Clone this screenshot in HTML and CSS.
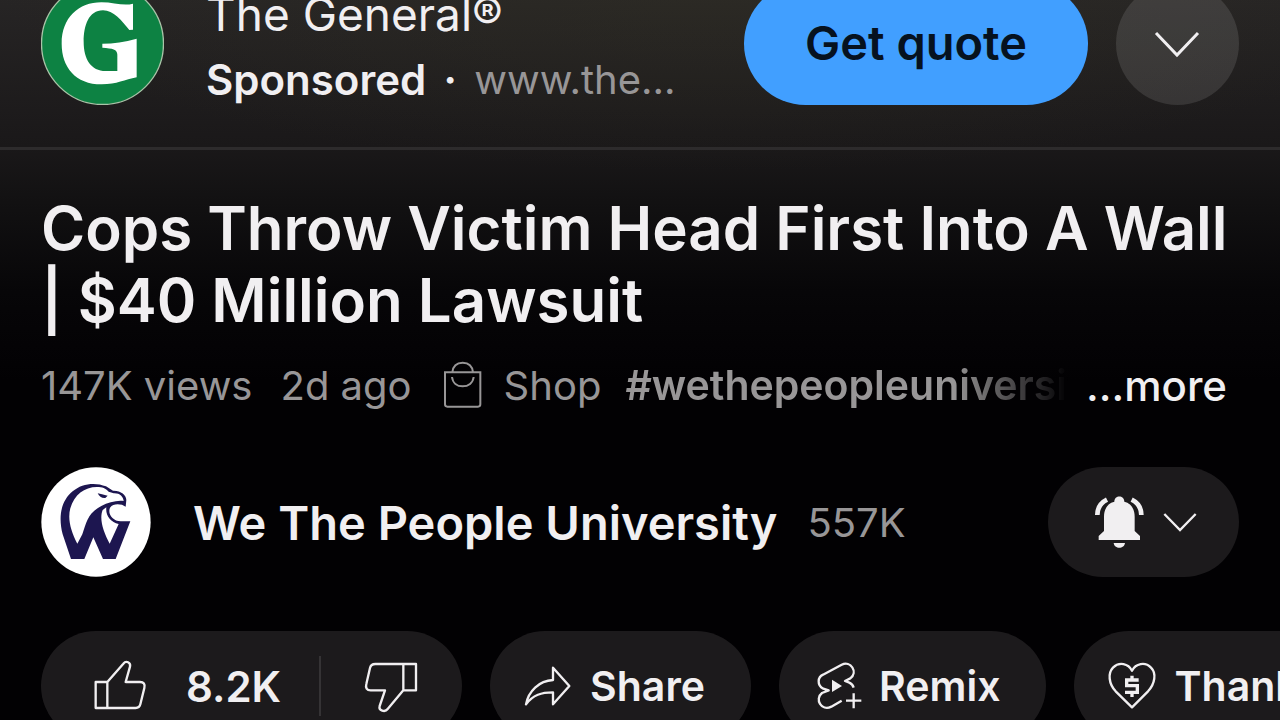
FILE: index.html
```html
<!DOCTYPE html>
<html lang="en">
<head>
<meta charset="utf-8">
<meta name="viewport" content="width=device-width, initial-scale=1">
<title>Cops Throw Victim Head First Into A Wall | $40 Million Lawsuit</title>
<link rel="stylesheet" href="styles.css">
</head>
<body>
<main class="watch">
  <section class="ad" aria-label="Advertisement">
    <svg class="ad-logo" viewBox="123 -51 369 369" role="img" aria-label="The General logo">
      <circle cx="307.500" cy="133.500" r="183" fill="#0d8243" stroke="#a9c4a8" stroke-width="4"/>
      <path fill="#fff" d="M399 14V92L388 93C365 65 340 34 309 34C266 34 251 80 251 128C251 180 273 216 317 216H352V167C352 151 338 148 307 146V134C342 134 373 129 410 119V235C374 242 351 256 305 256C226 256 185 204 185 134C185 56 236 10 304 10C342 10 371 22 399 14Z"/>
    </svg>
    <div class="ad-text">
      <div class="ad-name">The General®</div>
      <div class="ad-line"><b class="ad-sponsored">Sponsored</b><span class="ad-dot">·</span><a class="ad-url" href="#">www.the...</a></div>
    </div>
    <button class="ad-cta" type="button">Get quote</button>
    <button class="ad-toggle" type="button" aria-label="Show ad details">
      <svg class="chevron-lg" viewBox="0 0 48 30"><path class="line" d="M2 4L23 26L44 4"/></svg>
    </button>
  </section>

  <section class="info">
    <h1 class="title">Cops Throw Victim Head First Into A Wall | $40 Million Lawsuit</h1>
    <div class="meta">
      <span class="views">147K views</span>
      <span class="age">2d ago</span>
      <svg class="bag" viewBox="66 27 126 150" aria-hidden="true"><path d="M75 64H181V160Q181 167 174 167H82Q75 167 75 160ZM97 64C99 45 111 35 128 35C145 35 157 45 159 64M96 78C98 96 111 106 128 106C145 106 159 96 161 78"/></svg>
      <a class="shop" href="#">Shop</a>
      <a class="hashtag" href="#">#wethepeopleuniversity</a>
      <button class="more" type="button">...more</button>
    </div>
  </section>

  <section class="channel">
    <svg class="channel-logo" viewBox="63 51 330 330" role="img" aria-label="We The People University logo">
      <circle cx="228" cy="216" r="164" fill="#fff"/>
      <path fill="#1d1650" d="M153 327L128 253C113 195 126 150 158 124C185 100 226 96 258 109L279 122C302 121 319 135 319 150L317 170L306 164C291 161 278 162 270 173C262 191 278 213 302 214H331L287 327H249L220 262L193 327Z"/>
      <path fill="#fff" d="M172 281C153 244 142 208 151 175C163 134 193 111 231 111C247 111 257 115 266 125L281 130C299 129 310 140 311 153C291 150 265 157 244 168C202 190 200 217 187 253Z"/>
      <path fill="#fff" d="M269 281C250 245 237 207 248 180L259 172C256 197 272 217 296 222Z"/>
      <path fill="#1d1650" d="M233 130L246 133L263 137L256 144C245 145 238 140 233 130Z"/>
    </svg>
    <a class="channel-name" href="#">We The People University</a>
    <span class="subs">557K</span>
    <button class="bell" type="button" aria-label="Notification settings">
      <svg class="bell-icon" viewBox="184 132 168 168"><path fill="#f1eff1" d="M207 270V258L223 243V200C223 176 235 159 254 155C254 134 284 134 284 155C303 159 315 176 315 200V243L331 258V270ZM252 279H286C284 298 254 298 252 279Z"/><path fill="none" stroke="#f1eff1" stroke-width="14" d="M203 195C203 173 214 158 232 149M335 195C335 173 324 158 306 149"/></svg>
      <svg class="chevron-sm" viewBox="396 180 108 72"><path class="line" d="M403 192L450 240L497 192"/></svg>
    </button>
  </section>

  <section class="actions" aria-label="Video actions">
    <div class="pill rate">
      <button class="like" type="button" aria-label="Like, 8.2K">
        <svg class="thumb" viewBox="186 114 168 168"><path class="outline" d="M197 186H232V264H197ZM232 186L280 131C288 121 303 127 300 140L287 186H330C341 186 346 192 343 204L331 253C329 261 325 264 317 264H232"/></svg>
        <span>8.2K</span>
      </button>
      <span class="divider"></span>
      <button class="dislike" type="button" aria-label="Dislike">
        <svg class="thumb" viewBox="999 114 168 168"><path class="outline" d="M1158 211H1120V132H1158ZM1120 211L1073 267C1065 278 1045 272 1049 258L1065 211H1022C1010 211 1006 203 1009 192L1020 144C1022 135 1027 132 1036 132H1120"/></svg>
      </button>
    </div>
    <button class="pill action" type="button">
      <svg class="icon" viewBox="126 120 156 156"><path class="outline" d="M219 143L268 198L219 253V217C185 217 159 224 138 253C145 214 177 182 219 180Z"/></svg>
      <span>Share</span>
    </button>
    <button class="pill action" type="button">
      <svg class="icon" viewBox="38 120 156 156"><path class="outline" d="M130 242L99 260C69 275 48 237 71 219L91 211L75 206C55 195 58 171 74 164L130 134C157 120 180 157 156 175L140 183L153 188C160 191 164 196 166 203M166 220V265M143 242H189"/><path fill="#f1eff1" d="M101 179L131 198L101 216Z"/></svg>
      <span>Remix</span>
    </button>
    <button class="pill action" type="button">
      <svg class="icon" viewBox="917 120 156 156"><path class="outline" d="M995 262L946 214C925 191 922 160 938 143C957 124 984 131 995 152C1006 131 1034 124 1052 143C1069 160 1064 191 1043 214Z"/><path fill="none" stroke="#f1eff1" stroke-width="10" d="M1015 180H979V197H1011V217H974M995 167V180M995 217V231"/></svg>
      <span>Thanks</span>
    </button>
  </section>
</main>
</body>
</html>
```
FILE: styles.css
```css
* { box-sizing: border-box; }

body {
  margin: 0;
  height: 100vh;
  overflow: hidden;
  background: #020103;
  color: #f1eff1;
  font-family: Inter, Roboto, sans-serif;
}

button {
  margin: 0;
  padding: 0;
  border: 0;
  background: none;
  color: inherit;
  font: inherit;
  white-space: nowrap;
}

a { color: inherit; text-decoration: none; }
svg { display: block; flex: none; }

.line { fill: none; stroke: #f1eff1; }
.outline { fill: none; stroke: #f1eff1; stroke-width: 7; stroke-linejoin: round; }

/* The page is scrolled so that the ad row is partly out of view. */
.watch {
  margin-top: -18px;
  background:
    radial-gradient(ellipse 720px 190px at 56% 0, rgba(52, 50, 36, 0.4), transparent),
    linear-gradient(#282626 0, #1a1819 165px, #121112 220px, #070608 310px, #020103 400px);
}

.ad {
  display: flex;
  align-items: flex-start;
  padding: 0 41px 33px;
  border-bottom: 3px solid #2d2b2c;
}
.ad-logo { width: 123px; height: 123px; }
.ad-text { flex: 1; min-width: 0; padding-left: 42px; white-space: nowrap; }
.ad-name { font-size: 46px; line-height: 64px; }
.ad-line { display: flex; font-size: 40px; line-height: 68px; }
.ad-sponsored { font-size: 42px; font-weight: 600; }
.ad-dot { width: 48px; text-align: center; font-weight: 700; }
.ad-url { color: #989697; }
.ad-cta {
  width: 344px;
  height: 123px;
  padding-bottom: 3px;
  border-radius: 62px;
  background: #419fff;
  color: #06121f;
  font-size: 47px;
  font-weight: 600;
}
.ad-toggle {
  display: grid;
  place-items: center;
  width: 123px;
  height: 123px;
  margin-left: 28px;
  border-radius: 50%;
  background: rgba(255, 255, 255, 0.11);
}
.chevron-lg { width: 48px; height: 30px; stroke-width: 3; }

.info { padding: 42px 41px 0; }
.title {
  margin: 0;
  font-size: 60px;
  font-weight: 600;
  line-height: 72px;
}
.meta {
  display: flex;
  align-items: center;
  height: 50px;
  margin-top: 24px;
  color: #989697;
  font-size: 40px;
  white-space: nowrap;
}
.age { margin-left: 28px; }
.bag { width: 42px; height: 50px; margin-left: 30px; fill: none; stroke: #989697; stroke-width: 6; }
.shop { margin-left: 20px; }
.hashtag {
  flex: 1;
  min-width: 0;
  margin-left: 24px;
  overflow: hidden;
  font-size: 41px;
  font-weight: 600;
  -webkit-mask-image: linear-gradient(to right, #000 74%, transparent 100%);
  mask-image: linear-gradient(to right, #000 74%, transparent 100%);
}
.more { margin: 0 12px 0 18px; color: #f1eff1; font-size: 42px; font-weight: 500; }

.channel {
  display: flex;
  align-items: center;
  padding: 57px 41px 0;
}
.channel-logo { width: 110px; height: 110px; }
.channel-name { margin-left: 42px; font-size: 47px; font-weight: 600; }
.subs { margin-left: 30px; color: #989697; font-size: 40px; }
.bell {
  display: flex;
  align-items: center;
  gap: 15px;
  height: 110px;
  margin-left: auto;
  padding: 0 41px 0 43px;
  border-radius: 55px;
  background: #1c1a1c;
}
.bell-icon { width: 56px; height: 56px; }
.chevron-sm { width: 36px; height: 24px; stroke-width: 7; }

.actions {
  display: flex;
  gap: 28px;
  padding: 54px 0 0 41px;
  overflow: hidden;
  font-size: 41px;
  font-weight: 600;
}
.pill {
  display: flex;
  flex: none;
  align-items: center;
  height: 110px;
  border-radius: 55px;
  background: #1c1a1c;
}
.rate { padding: 0 43px 0 51px; }
.like { display: flex; align-items: center; gap: 38px; font-size: 42px; }
.thumb { width: 56px; height: 56px; }
.divider { width: 2px; height: 60px; margin: 0 42px 0 38px; background: #353335; }
.action { gap: 16px; padding: 0 46px 0 32px; }
.icon { width: 52px; height: 52px; }
```
